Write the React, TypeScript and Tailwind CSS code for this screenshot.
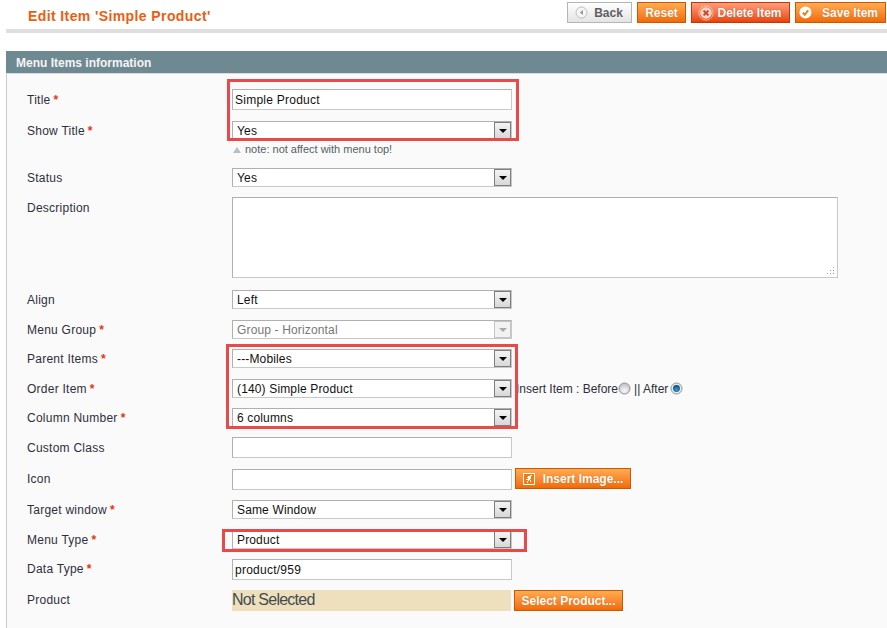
import React from 'react';

const orangeBtn =
  'h-[21px] border border-[#c85a06] bg-gradient-to-b from-[#ffab4f] to-[#f26a00] text-white font-bold text-xs flex items-center justify-center [text-shadow:0_0_1px_#c85a06]';

function Arrow() {
  return (
    <span className="absolute right-px top-px h-[17px] w-[17px] border border-[#7e7e7e] bg-gradient-to-b from-[#f4f4f4] to-[#d8d8d8] flex items-center justify-center pointer-events-none">
      <span className="w-0 h-0 border-x-[4px] border-x-transparent border-t-[4px] border-t-black" />
    </span>
  );
}

function Select({ value, disabled }: { value: string; disabled?: boolean }) {
  return (
    <div className="relative w-[280px] h-[19px] shrink-0">
      <select
        defaultValue={value}
        disabled={disabled}
        className={`appearance-none block w-full h-full border border-[#b0b0b0] border-b-[#c8c8c8] border-r-[#c8c8c8] bg-white pl-[4px] text-xs tracking-[0.15px] outline-none ${disabled ? 'text-[#777]' : 'text-[#111]'}`}
      >
        <option>{value}</option>
      </select>
      {disabled ? (
        <span className="absolute right-px top-px h-[17px] w-[17px] border border-[#c4c4c4] bg-[#f2f2f2] flex items-center justify-center">
          <span className="w-0 h-0 border-x-[4px] border-x-transparent border-t-[4px] border-t-[#a8a8a8]" />
        </span>
      ) : (
        <Arrow />
      )}
    </div>
  );
}

function Input({ value }: { value?: string }) {
  return (
    <input
      defaultValue={value}
      className="block w-[280px] h-[21px] shrink-0 border border-[#b0b0b0] border-b-[#c8c8c8] border-r-[#c8c8c8] bg-white pl-[2px] pr-[2px] text-xs tracking-[0.25px] text-[#111] outline-none"
    />
  );
}

function Row({ label, required, mt, top, lift, children }: { label: string; required?: boolean; mt: string; top?: boolean; lift?: boolean; children: React.ReactNode }) {
  return (
    <div className={`flex items-start ${mt}`}>
      <label className={`w-[205px] shrink-0 flex items-center text-xs tracking-[0.25px] text-[#2f2f3a] ${top ? 'h-[22px]' : 'self-stretch'} ${lift ? 'pb-[2px]' : ''}`}>
        <span>{label}</span>
        {required && <span className="ml-[3px] text-[#eb340a] font-bold">*</span>}
      </label>
      {children}
    </div>
  );
}

function Radio({ checked }: { checked?: boolean }) {
  return (
    <svg width="13" height="13" viewBox="0 0 13 13" className="shrink-0">
      <defs>
        <radialGradient id="radio-off" cx="0.5" cy="0.7" r="0.7">
          <stop offset="0" stopColor="#fafafa" />
          <stop offset="1" stopColor="#b9bcbe" />
        </radialGradient>
        <radialGradient id="radio-on" cx="0.5" cy="0.65" r="0.6">
          <stop offset="0" stopColor="#35a3e0" />
          <stop offset="1" stopColor="#0b4a78" />
        </radialGradient>
      </defs>
      <circle cx="6.5" cy="6.5" r="5.5" fill={checked ? '#e4e9ec' : 'url(#radio-off)'} stroke="#8f9498" />
      {checked && <circle cx="6.5" cy="6.5" r="3.4" fill="url(#radio-on)" />}
    </svg>
  );
}

export default function App() {
  return (
    <div className="relative w-[887px] h-[628px] overflow-hidden bg-white font-['Liberation_Sans',Arial,sans-serif]">
      {/* page head */}
      <div className="ml-[6px] h-[33px] border-b-[4px] border-[#dfdfdf] flex items-start justify-between pr-px">
        <h3 className="ml-[22px] mt-[7px] text-sm leading-[18px] tracking-[0.4px] font-bold text-[#eb5e12]">Edit Item 'Simple Product'</h3>
        <div className="flex gap-[5px] mt-[2px]">
          <button className="w-[65px] h-[21px] border border-[#b5b5b5] bg-gradient-to-b from-white to-[#e4e4e4] text-[#5f5f5f] font-bold text-xs flex items-center justify-center gap-[6px] pr-px">
            <svg width="13" height="13" viewBox="0 0 13 13">
              <circle cx="6.5" cy="6.5" r="5.5" fill="#f5f5f5" stroke="#bdbdbd" />
              <path d="M8 4 L4.8 6.5 L8 9 Z" fill="#9a9a9a" />
            </svg>
            Back
          </button>
          <button className={`${orangeBtn} w-[49px]`}>Reset</button>
          <button className="w-[99px] h-[21px] border border-[#c03a06] bg-gradient-to-b from-[#ff9c78] to-[#e84200] text-white font-bold text-xs flex items-center justify-center gap-[3px] pr-px [text-shadow:0_0_1px_#c03a06]">
            <svg width="16" height="16" viewBox="0 0 16 16">
              <circle cx="8" cy="8" r="7.2" fill="none" stroke="#ffc9b0" strokeWidth="0.8" />
              <circle cx="8" cy="8" r="5.8" fill="#f8d4c4" />
              <path d="M5.6 5.6 L10.4 10.4 M10.4 5.6 L5.6 10.4" stroke="#c9472a" strokeWidth="2" />
            </svg>
            Delete Item
          </button>
          <button className={`${orangeBtn} w-[91px] gap-[10px] pr-[4px]`}>
            <svg width="13" height="13" viewBox="0 0 13 13">
              <circle cx="6.5" cy="6.5" r="6" fill="#fff" />
              <path d="M3.8 6.6 L5.8 8.8 L9.2 4.2" fill="none" stroke="#e9780f" strokeWidth="1.8" />
            </svg>
            Save Item
          </button>
        </div>
      </div>

      {/* fieldset */}
      <div className="ml-[6px] mt-[18px]">
        <div className="h-[23px] bg-[#6f8992] border-b border-[#d5dcdf] pl-[10px] pt-[1px] flex items-center text-xs font-bold text-[#f4f4f4]">
          Menu Items information
        </div>
        <div className="h-[555px] bg-[#fafafa] border-l border-[#cccccc] pl-[20px] pt-[15px]">
          <Row label="Title" required mt="mt-0">
            <Input value="Simple Product" />
          </Row>
          <Row label="Show Title" required mt="mt-[11px]">
            <Select value="Yes" />
          </Row>
          <div className="ml-[206px] mt-[1px] h-[17px] flex items-center gap-[4px] text-[11px] text-[#555f66]">
            <span className="w-0 h-0 border-x-[4px] border-x-transparent border-b-[6px] border-b-[#b3c0c6]" />
            note: not affect with menu top!
          </div>
          <Row label="Status" mt="mt-[10px]">
            <Select value="Yes" />
          </Row>
          <Row label="Description" top mt="mt-[10px]">
            <div className="relative w-[606px] h-[81px] border border-[#b0b0b0] border-b-[#c8c8c8] border-r-[#c8c8c8] bg-white">
              <svg width="8" height="8" viewBox="0 0 8 8" className="absolute right-[2px] bottom-[2px]">
                <path d="M6 0h1v1H6z M3 3h1v1H3z M6 3h1v1H6z M0 6h1v1H0z M3 6h1v1H3z M6 6h1v1H6z" fill="#a8a8a8" />
              </svg>
            </div>
          </Row>
          <Row label="Align" mt="mt-[12px]">
            <Select value="Left" />
          </Row>
          <Row label="Menu Group" required mt="mt-[11px]">
            <Select value="Group - Horizontal" disabled />
          </Row>
          <Row label="Parent Items" required mt="mt-[10px]">
            <Select value="---Mobiles" />
          </Row>
          <Row label="Order Item" required mt="mt-[11px]">
            <Select value="(140) Simple Product" />
            <div className="h-[19px] ml-[4px] flex items-center text-xs text-[#2f2f3a] whitespace-nowrap">
              Insert Item : Before
              <Radio />
              <span className="ml-[3px] mr-[2px]">|| After</span>
              <Radio checked />
            </div>
          </Row>
          <Row label="Column Number" required mt="mt-[10px]">
            <Select value="6 columns" />
          </Row>
          <Row label="Custom Class" mt="mt-[10px]">
            <Input />
          </Row>
          <Row label="Icon" lift mt="mt-[11px]">
            <Input />
            <button className={`${orangeBtn} ml-[3px] -mt-px w-[116px] gap-[8px]`}>
              <svg width="12" height="12" viewBox="0 0 12 12">
                <rect x="0.5" y="0.5" width="11" height="11" fill="#f47b12" stroke="#fff" />
                <path d="M7 2h2v1H7z M5 3h3v1H5z M4 4h4v1H4z M5 5h3v1H5z M3 6h4v1H3z M5 7h1v1H5z M7 7h1v1H7z M4 8h1v2H4z M7 8h1v1H7z" fill="#fff" />
              </svg>
              Insert Image...
            </button>
          </Row>
          <Row label="Target window" required mt="mt-[10px]">
            <Select value="Same Window" />
          </Row>
          <Row label="Menu Type" required mt="mt-[11px]">
            <Select value="Product" />
          </Row>
          <Row label="Data Type" required lift mt="mt-[10px]">
            <Input value="product/959" />
          </Row>
          <Row label="Product" lift mt="mt-[10px]">
            <div className="w-[279px] h-[21px] shrink-0 bg-[#eee0bd] text-base tracking-[-0.75px] leading-[20px] text-[#444b52]">Not Selected</div>
            <button className={`${orangeBtn} ml-[3px] w-[109px]`}>Select Product...</button>
          </Row>
        </div>
      </div>

      {/* red annotation boxes */}
      <div className="absolute left-[227px] top-[79px] w-[292px] h-[62px] border-[3px] border-[#e84a4a]" />
      <div className="absolute left-[226px] top-[344px] w-[292px] h-[85px] border-[3px] border-[#e84a4a]" />
      <div className="absolute left-[222px] top-[529px] w-[305px] h-[23px] border-[3px] border-[#e84a4a]" />
    </div>
  );
}
